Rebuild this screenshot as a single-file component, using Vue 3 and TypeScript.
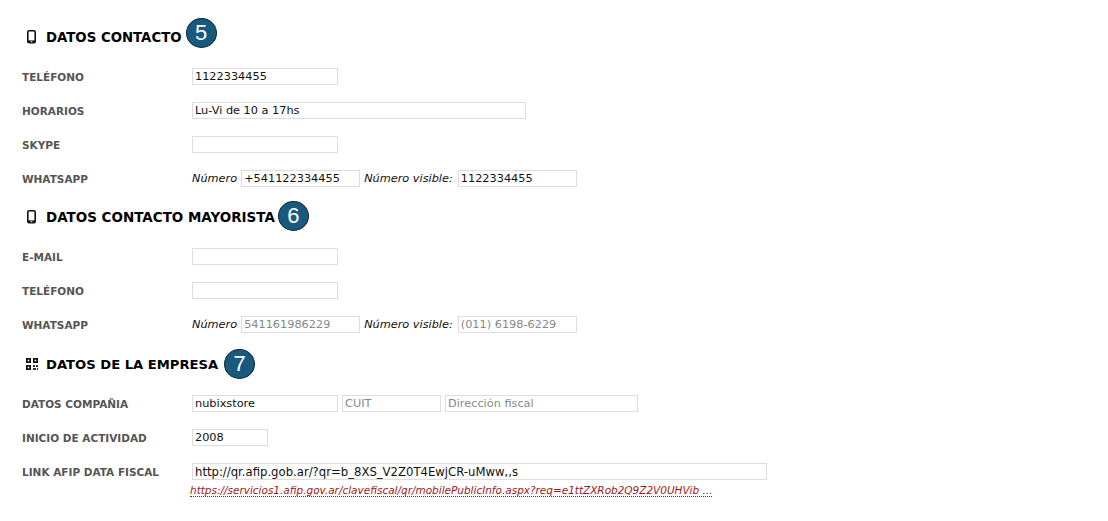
<script setup lang="ts">
</script>

<template>
  <main class="page">
    <section class="section">
      <h2 class="heading">
        <svg class="icon shifted" viewBox="0 0 12 14" width="12" height="14"><rect x="2.8" y="0.8" width="7.4" height="12" rx="1.3" fill="none" stroke="#111" stroke-width="1.6"/><rect x="2.8" y="10.4" width="7.4" height="2.6" fill="#111"/><rect x="5.7" y="11.2" width="1.6" height="1" fill="#fff"/></svg>
        <span>DATOS CONTACTO</span>
        <b class="badge raised">5</b>
      </h2>
      <div class="row"><label>TELÉFONO</label><input class="w146" value="1122334455" /></div>
      <div class="row"><label>HORARIOS</label><input class="w334" value="Lu-Vi de 10 a 17hs" /></div>
      <div class="row"><label>SKYPE</label><input class="w146" /></div>
      <div class="row">
        <label>WHATSAPP</label>
        <em>Número</em><input class="w119" value="+541122334455" />
        <em>Número visible:</em><input class="w119" value="1122334455" />
      </div>
    </section>

    <section class="section">
      <h2 class="heading long">
        <svg class="icon shifted" viewBox="0 0 12 14" width="12" height="14"><rect x="2.8" y="0.8" width="7.4" height="12" rx="1.3" fill="none" stroke="#111" stroke-width="1.6"/><rect x="2.8" y="10.4" width="7.4" height="2.6" fill="#111"/><rect x="5.7" y="11.2" width="1.6" height="1" fill="#fff"/></svg>
        <span>DATOS CONTACTO MAYORISTA</span>
        <b class="badge tight">6</b>
      </h2>
      <div class="row"><label>E-MAIL</label><input class="w146" /></div>
      <div class="row"><label>TELÉFONO</label><input class="w146" /></div>
      <div class="row">
        <label>WHATSAPP</label>
        <em>Número</em><input class="w119" placeholder="541161986229" />
        <em>Número visible:</em><input class="w119" placeholder="(011) 6198-6229" />
      </div>
    </section>

    <section class="section">
      <h2 class="heading short">
        <svg class="icon qr" viewBox="0 0 14 16" width="14" height="16"><g fill="none" stroke="#111" stroke-width="1.7"><rect x="1.85" y="3.85" width="3.3" height="3.3"/><rect x="8.85" y="3.85" width="3.3" height="3.3"/><rect x="1.85" y="10.85" width="3.3" height="3.3"/></g><path d="M8 10h2v2H8zM11 10h2v2h-2zM8 13h3v2H8zM12 13h1v2h-1z" fill="#333"/></svg>
        <span>DATOS DE LA EMPRESA</span>
        <b class="badge wide">7</b>
      </h2>
      <div class="row">
        <label>DATOS COMPAÑIA</label>
        <input class="w146" value="nubixstore" />
        <input class="w99" placeholder="CUIT" />
        <input class="w193" placeholder="Dirección fiscal" />
      </div>
      <div class="row"><label>INICIO DE ACTIVIDAD</label><input class="w76" value="2008" /></div>
      <div class="row"><label>LINK AFIP DATA FISCAL</label><input class="w575 url" value="http://qr.afip.gob.ar/?qr=b_8XS_V2Z0T4EwjCR-uMww,,s" /></div>
      <a class="link" href="#">https://servicios1.afip.gov.ar/clavefiscal/qr/mobilePublicInfo.aspx?req=e1ttZXRob2Q9Z2V0UHVib ...</a>
    </section>
  </main>
</template>

<style scoped>
.page {
  width: 1108px;
  height: 521px;
  box-sizing: border-box;
  padding: 21px 0 0 22px;
  background: #fff;
  font-family: "DejaVu Sans", Verdana, sans-serif;
  font-size: 11.3px;
  color: #111;
  overflow: hidden;
}
.section {
  margin-bottom: 14px;
}
.section + .section + .section {
  margin-top: 15px;
}
.heading {
  display: flex;
  align-items: center;
  height: 30px;
  margin: 0 0 17px;
  padding-left: 3px;
  font-size: 13.3px;
  font-weight: 700;
  color: #000;
}
.heading.long {
  font-size: 13.47px;
}
.heading.short {
  font-size: 13.15px;
}
.heading span {
  padding-top: 2px;
}
.icon {
  flex: none;
  margin-right: 9px;
}
.icon.shifted {
  margin-top: 2px;
}
.icon.qr {
  margin-right: 7px;
}
.badge {
  flex: none;
  display: flex;
  align-items: center;
  justify-content: center;
  width: 31px;
  height: 30px;
  box-sizing: border-box;
  margin-left: 4px;
  border: 1.5px solid #10293c;
  border-radius: 50%;
  background: #175a7e;
  color: #fff;
  font: 400 22px "Liberation Sans", Arial, sans-serif;
}
.badge.raised {
  margin-bottom: 7px;
}
.badge.tight {
  margin-left: 3px;
}
.badge.wide {
  margin-left: 6px;
  margin-top: 2px;
}
.row {
  display: flex;
  align-items: center;
  height: 17px;
  margin-bottom: 17px;
}
.row:last-of-type {
  margin-bottom: 0;
}
label {
  flex: none;
  width: 170px;
  font-size: 10.5px;
  font-weight: 700;
  color: #555;
}
em {
  margin-right: 4px;
  font-style: italic;
}
input + em {
  margin-left: 4px;
}
em + input + em + input {
  margin-left: 1px;
}
input {
  height: 17px;
  box-sizing: border-box;
  padding: 0 2px;
  border: 1px solid #ddd;
  background: #fff;
  font: inherit;
  color: #111;
  outline: none;
}
input::placeholder {
  color: #888;
  opacity: 1;
}
input + input {
  margin-left: 4px;
}
.url {
  font-size: 11.66px;
}
.w76 { width: 76px; }
.w99 { width: 99px; }
.w119 { width: 119px; }
.w146 { width: 146px; }
.w193 { width: 193px; }
.w334 { width: 334px; }
.w575 { width: 575px; }
.link {
  display: block;
  margin: 4px 0 0 168px;
  width: max-content;
  font-style: italic;
  font-size: 10.48px;
  color: #a01818;
  text-decoration: none;
  border-bottom: 1px dotted #a01818;
  line-height: 12px;
}
</style>
